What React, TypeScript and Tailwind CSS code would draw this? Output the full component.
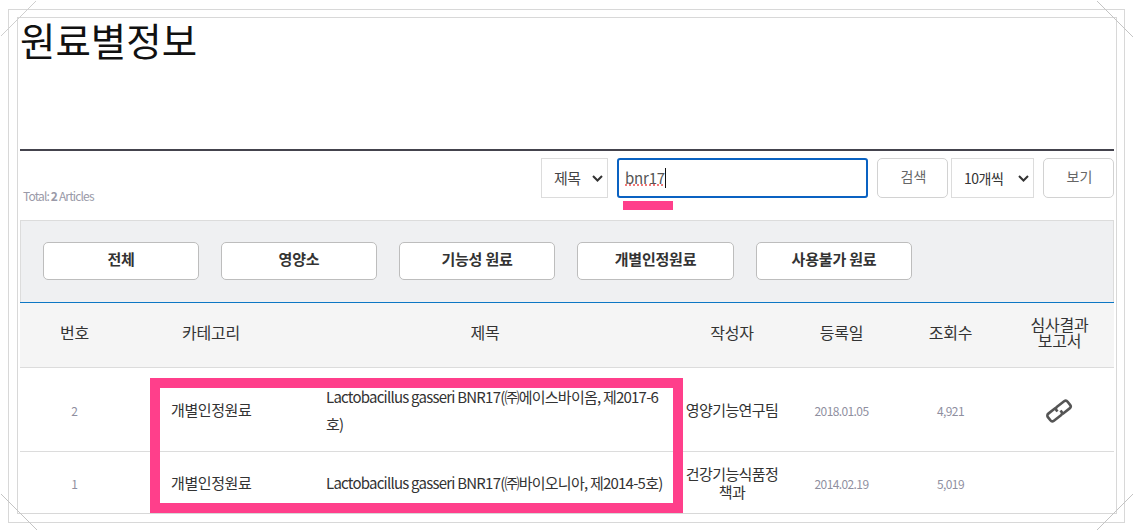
import React from "react";

const font = { fontFamily: '"Noto Sans CJK KR", "Noto Sans", sans-serif' };

function Chain() {
  return (
    <svg width="28" height="26" viewBox="0 0 28 26" fill="none" stroke="#555" strokeWidth="2.6" className="inline-block">
      <g transform="rotate(-38 14 13)">
        <path d="M13 8.5H4a2.5 2.5 0 0 0-2.5 2.5v4A2.5 2.5 0 0 0 4 17.5h9a2.5 2.5 0 0 0 2.5-2.5v-1.5" />
        <path d="M15 17.5h9a2.5 2.5 0 0 0 2.5-2.5v-4A2.5 2.5 0 0 0 24 8.5h-9a2.5 2.5 0 0 0-2.5 2.5v1.5" />
      </g>
    </svg>
  );
}

function Chevron() {
  return (
    <svg width="11" height="7" viewBox="0 0 11 7" fill="none" stroke="#333" strokeWidth="2">
      <path d="M1 1l4.5 4.5L10 1" />
    </svg>
  );
}

function Corners() {
  return (
    <svg width="1134" height="531" viewBox="0 0 1134 531" fill="none" className="absolute inset-0 pointer-events-none">
      <path d="M36 1L1 36" stroke="#cfcfcf" strokeWidth="1" />
      <path d="M1097 1L1133 37" stroke="#c4c4c4" strokeWidth="1" />
      <path d="M1 494L37 530" stroke="#c4c4c4" strokeWidth="1" />
      <path d="M1133 494L1097 530" stroke="#c4c4c4" strokeWidth="1" />
    </svg>
  );
}

const buttons = [
  ["전체", "w-[156px]"],
  ["영양소", "w-[156px]"],
  ["기능성 원료", "w-[156px]"],
  ["개별인정원료", "w-[157px]"],
  ["사용불가 원료", "w-[156px]"],
];

export default function App() {
  return (
    <div style={font} className="relative w-[1134px] h-[531px] overflow-hidden bg-white text-[#222]">
      <div className="px-[20px]">
        <h1 className="h-[149px] pt-[16px] text-[38.5px] leading-[46px] font-normal text-[#111]">원료별정보</h1>
        <div className="border-t-2 border-[#44434d] h-[71px] flex">
          <div className="flex-1 pt-[37px] pl-[3px] text-[12px] leading-[16px] tracking-[-0.85px] text-[#9a9aa8]">
            Total: <b>2</b> Articles
          </div>
          <div className="flex items-start pt-[7px] text-[14px]">
            <div className="w-[67px] h-[40px] border border-[#dcdcdc] flex items-center pl-[12px] gap-[11px] text-[#444]">
              <span className="text-[15px] tracking-[-0.5px]">제목</span>
              <Chevron />
            </div>
            <div className="ml-[9px] w-[251px] h-[40px] border-2 border-[#0a62c2] rounded-[3px] flex items-center pl-[6px] text-[#555]">
              <span className="text-[15px] tracking-[-0.2px] underline decoration-dotted decoration-[#f07878] decoration-2 underline-offset-[1px]">bnr17</span>
              <span className="w-px h-[20px] bg-[#111]" />
            </div>
            <button className="ml-[9px] w-[71px] h-[40px] border border-[#d2d2d2] rounded-[5px] text-[#666] pb-[4px] pl-[2px]">검색</button>
            <div className="ml-[3px] w-[83px] h-[40px] border border-[#dcdcdc] flex items-center pl-[12px] gap-[15px] text-[#333]">
              <span className="tracking-[-0.5px]">10개씩</span>
              <Chevron />
            </div>
            <button className="ml-[9px] w-[71px] h-[40px] border border-[#d2d2d2] rounded-[5px] text-[#666] pb-[4px] pl-[2px]">보기</button>
          </div>
        </div>
        <div className="h-[82px] bg-[#eff0f2] border border-[#dcdcdc] border-b-0 flex items-start gap-[22px] pl-[22px] pt-[21px]">
          {buttons.map(([t, w]) => (
            <button key={t} className={`${w} h-[38px] bg-white border border-[#bdbdbd] rounded-[5px] text-[15px] font-bold text-[#333] pb-[4px] tracking-[-0.2px]`}>{t}</button>
          ))}
        </div>
        <table className="w-[1094px] table-fixed border-collapse border-t border-[#0d77c4] text-[15px]">
          <colgroup>
            <col className="w-[109px]" />
            <col className="w-[164px]" />
            <col className="w-[384px]" />
            <col className="w-[110px]" />
            <col className="w-[109px]" />
            <col className="w-[109px]" />
            <col className="w-[109px]" />
          </colgroup>
          <thead>
            <tr className="h-[65px] bg-[#f5f5f5] border-b border-[#dcdcdc] text-[#333] text-[16px] tracking-[-0.2px]">
              <th className="font-normal pb-[7px]">번호</th>
              <th className="font-normal pb-[7px]">카테고리</th>
              <th className="font-normal pb-[7px]">제목</th>
              <th className="font-normal pb-[7px]">작성자</th>
              <th className="font-normal pb-[7px]">등록일</th>
              <th className="font-normal pb-[7px]">조회수</th>
              <th className="font-normal leading-[16px] pb-[7px]">심사결과<br />보고서</th>
            </tr>
          </thead>
          <tbody>
            <tr className="h-[84px] border-b border-[#dcdcdc] text-center">
              <td className="text-[12px] text-[#8f8f9f] pt-[2px]">2</td>
              <td className="text-left pl-[42px] text-[#333] tracking-[-0.4px] pt-[1px]">개별인정원료</td>
              <td className="text-left pl-[33px] pr-[17px] leading-[27px] tracking-[-0.77px] text-[#333]">Lactobacillus gasseri BNR17(㈜에이스바이옴, 제2017-6호)</td>
              <td className="text-[#333] tracking-[-0.6px] pt-[1px]">영양기능연구팀</td>
              <td className="text-[12px] text-[#8f8f9f] tracking-[-0.6px] pt-[2px]">2018.01.05</td>
              <td className="text-[12px] text-[#8f8f9f] tracking-[-0.6px] pt-[2px]">4,921</td>
              <td className="pt-[2px] pr-[1px]"><Chain /></td>
            </tr>
            <tr className="h-[62px] border-b border-[#dcdcdc] text-center">
              <td className="text-[12px] text-[#8f8f9f] pt-[2px]">1</td>
              <td className="text-left pl-[42px] text-[#333] tracking-[-0.4px] pt-[2px]">개별인정원료</td>
              <td className="text-left pl-[33px] pr-[14px] tracking-[-0.77px] text-[#333] pt-[2px]">Lactobacillus gasseri BNR17(㈜바이오니아, 제2014-5호)</td>
              <td className="text-[#333] tracking-[-0.6px] leading-[18px]">건강기능식품정<br />책과</td>
              <td className="text-[12px] text-[#8f8f9f] tracking-[-0.6px] pt-[2px]">2014.02.19</td>
              <td className="text-[12px] text-[#8f8f9f] tracking-[-0.6px] pt-[2px]">5,019</td>
              <td></td>
            </tr>
          </tbody>
        </table>
      </div>
      <div className="absolute left-[8px] top-[9px] w-[1117px] h-[514px] border border-[#d8d8d8] pointer-events-none" />
      <div className="absolute left-[17px] top-[17px] w-[1100px] h-[497px] border border-[#d8d8d8] pointer-events-none" />
      <Corners />
      <div className="absolute left-[623px] top-[201px] w-[50px] h-[9px] bg-[#ff3f8b]" />
      <div className="absolute left-[150px] top-[378px] w-[533px] h-[135px] border-[10px] border-[#ff3f8b] pointer-events-none" />
    </div>
  );
}
